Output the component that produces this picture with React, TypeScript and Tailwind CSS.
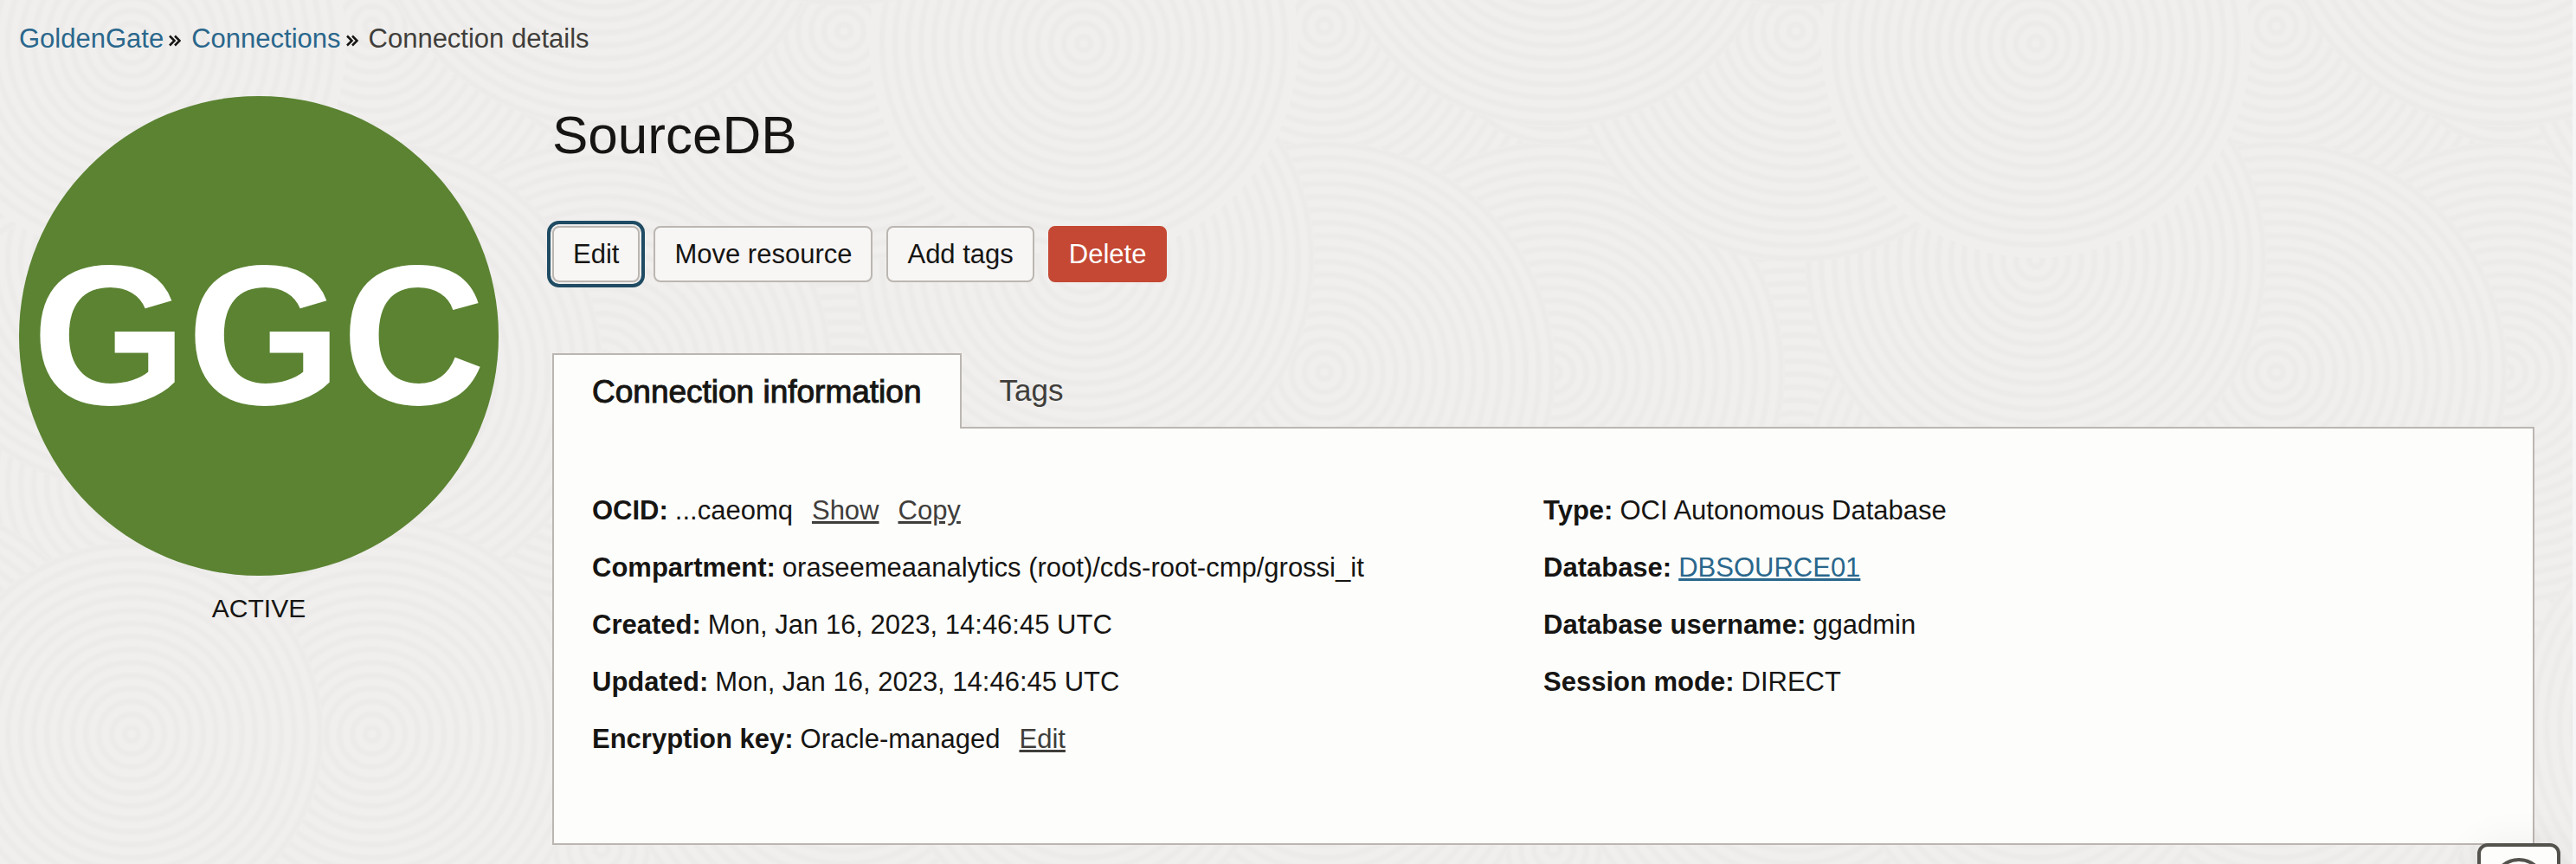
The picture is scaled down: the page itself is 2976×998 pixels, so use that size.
import type { ReactNode } from "react";

type Disc = { x: number; y: number; r: number };

const TILE = 1100;

const discs: Disc[] = [
  { x: 975, y: 560, r: 268 },
  { x: 430, y: 30, r: 268 },
  { x: 152, y: 560, r: 268 },
  { x: 695, y: 430, r: 266 },
  { x: 430, y: 430, r: 266 },
  { x: 152, y: 300, r: 266 },
  { x: 695, y: 36, r: 130 },
  { x: 975, y: 36, r: 266 },
  { x: 152, y: 50, r: 248 },
  { x: 695, y: 980, r: 266 },
  { x: 975, y: 840, r: 266 },
  { x: 430, y: 848, r: 250 },
  { x: 152, y: 848, r: 220 },
];

const offsets = [-TILE, 0, TILE];

function rings(limit: number) {
  const list: number[] = [];
  for (let r = 8; r < limit; r += 15) list.push(r);
  return list;
}

function Swirls() {
  return (
    <svg aria-hidden="true" className="absolute inset-0 -z-10 h-full w-full">
      <defs>
        <pattern id="swirls" width={TILE} height={TILE} patternUnits="userSpaceOnUse">
          <rect width={TILE} height={TILE} fill="#f0efed" />
          {discs.map((d, i) =>
            offsets.map((ox) =>
              offsets.map((oy) => (
                <g key={`${i}/${ox}/${oy}`} transform={`translate(${d.x + ox} ${d.y + oy})`}>
                  <circle r={d.r} fill="#f0efed" />
                  {rings(d.r).map((r) => (
                    <g key={r} fill="none">
                      <circle r={r} stroke="#eeedeb" strokeWidth="8" />
                      <circle r={r} stroke="#ecebe9" strokeWidth="4" />
                    </g>
                  ))}
                </g>
              )),
            ),
          )}
        </pattern>
      </defs>
      <rect width="100%" height="100%" fill="url(#swirls)" />
    </svg>
  );
}

function Chevrons() {
  return (
    <svg aria-hidden="true" viewBox="0 0 14 14" className="mt-1 h-3.5 w-3.5" fill="none" stroke="#161513" strokeWidth="2.5">
      <path d="M1 1.5 6.5 7 1 12.5M7 1.5 12.5 7 7 12.5" />
    </svg>
  );
}

const buttonBase = "h-[65px] rounded-lg border-2 px-[22px] text-[31px] leading-none";
const plainButton = "border-[#bbb6b1] bg-[#f7f6f5] text-[#161513]";
const textAction = "text-[#403e3b] underline decoration-[3px] underline-offset-2";

function Field({ label, children }: { label: string; children: ReactNode }) {
  return (
    <div className="flex items-baseline">
      <dt className="mr-2 font-bold">{label}:</dt>
      <dd className="flex gap-[22px]">{children}</dd>
    </div>
  );
}

export default function App() {
  return (
    <div className="relative isolate min-h-screen overflow-hidden border-r-4 border-[#f5f5f6] bg-[#f0efed] pb-[22px] font-['Liberation_Sans',Arial,sans-serif] text-[31px] leading-[36px] text-[#161513]">
      <Swirls />
      <nav aria-label="Breadcrumb" className="px-[22px] pt-[27px]">
        <ol className="flex items-center">
          <li>
            <a href="#goldengate" className="text-[#2a678c]">GoldenGate</a>
          </li>
          <li className="ml-1.5 flex items-center gap-3">
            <Chevrons />
            <a href="#connections" className="text-[#2a678c]">Connections</a>
          </li>
          <li aria-current="page" className="ml-1.5 flex items-center gap-3 text-[#403e3b]">
            <Chevrons />
            Connection details
          </li>
        </ol>
      </nav>

      <div className="mt-12 flex items-start pr-11 pl-[22px]">
        <aside className="w-[554px] shrink-0 text-center">
          <div className="flex aspect-square items-center justify-center rounded-full bg-[#5b8332] text-[230px] leading-none font-bold text-white">
            GGC
          </div>
          <p className="mt-5 text-[30px]">ACTIVE</p>
        </aside>

        <main className="ml-[62px] min-w-0 flex-1">
          <h1 className="mt-2.5 text-[62px] leading-[70px]">SourceDB</h1>
          <div className="mt-[70px] flex gap-4">
            <button type="button" className={`${buttonBase} ${plainButton} outline-4 outline-offset-2 outline-[#1f4b63]`}>Edit</button>
            <button type="button" className={`${buttonBase} ${plainButton}`}>Move resource</button>
            <button type="button" className={`${buttonBase} ${plainButton}`}>Add tags</button>
            <button type="button" className={`${buttonBase} border-[#c44833] bg-[#c44833] text-white`}>Delete</button>
          </div>

          <div role="tablist" className="mt-[82px] flex">
            <button
              type="button"
              role="tab"
              aria-selected="true"
              className="relative z-10 -mb-0.5 h-[87px] border-2 border-b-0 border-[#bbb6b1] bg-[#fdfdfb] px-11 text-[37px] leading-none [-webkit-text-stroke:1px_#161513]"
            >
              Connection information
            </button>
            <button type="button" role="tab" aria-selected="false" className="px-11 text-[35px] leading-none text-[#403e3b]">
              Tags
            </button>
          </div>

          <section
            role="tabpanel"
            aria-label="Connection information"
            className="grid h-[483px] grid-cols-2 border-2 border-[#bbb6b1] bg-[#fdfdfb] px-11 pt-[77px]"
          >
            <dl className="flex flex-col gap-[30px]">
              <Field label="OCID">
                <span>...caeomq</span>
                <a href="#show" className={textAction}>Show</a>
                <a href="#copy" className={textAction}>Copy</a>
              </Field>
              <Field label="Compartment">oraseemeaanalytics (root)/cds-root-cmp/grossi_it</Field>
              <Field label="Created">Mon, Jan 16, 2023, 14:46:45 UTC</Field>
              <Field label="Updated">Mon, Jan 16, 2023, 14:46:45 UTC</Field>
              <Field label="Encryption key">
                <span>Oracle-managed</span>
                <a href="#edit-key" className={textAction}>Edit</a>
              </Field>
            </dl>
            <dl className="flex flex-col gap-[30px]">
              <Field label="Type">OCI Autonomous Database</Field>
              <Field label="Database">
                <a href="#dbsource01" className="text-[#2a678c] underline decoration-[3px] underline-offset-2">DBSOURCE01</a>
              </Field>
              <Field label="Database username">ggadmin</Field>
              <Field label="Session mode">DIRECT</Field>
            </dl>
          </section>
        </main>
      </div>

      <button
        type="button"
        aria-label="Help"
        className="absolute right-3.5 -bottom-[72px] flex h-24 w-24 items-center justify-center rounded-xl border-4 border-[#53524c] bg-[#fdfdfb] shadow-[0_0_48px_rgba(0,0,60,0.06)]"
      >
        <svg aria-hidden="true" viewBox="0 0 64 64" className="h-16 w-16" fill="none" stroke="#53524c" strokeWidth="4">
          <circle cx="32" cy="32" r="29" />
          <circle cx="32" cy="32" r="12" />
          <path d="M12 12 23 23M52 12 41 23M12 52 23 41M52 52 41 41" />
        </svg>
      </button>
    </div>
  );
}
